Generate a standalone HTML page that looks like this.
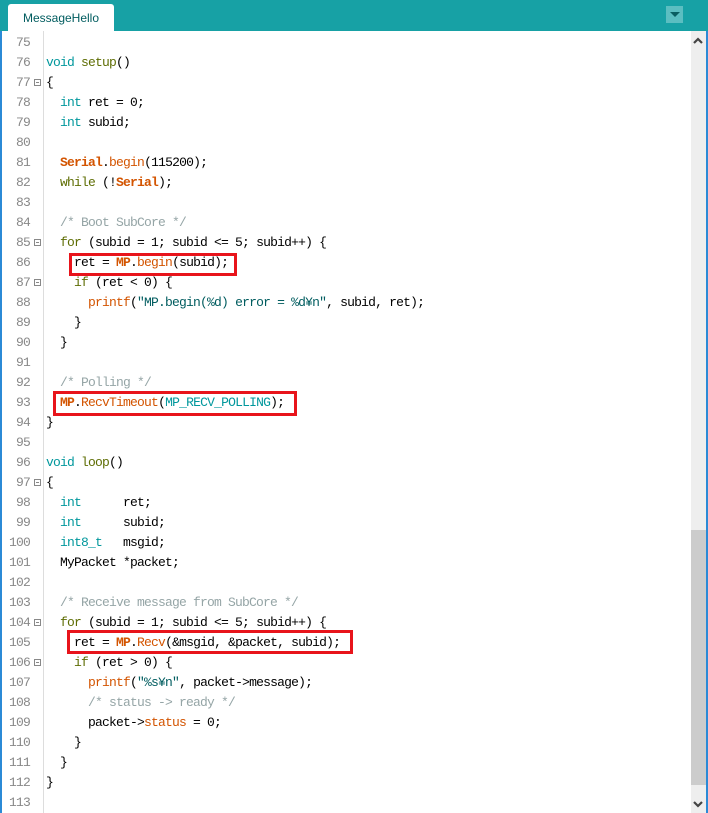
<!DOCTYPE html>
<html><head><meta charset="utf-8"><style>
html,body{margin:0;padding:0;}
body{width:708px;height:813px;position:relative;overflow:hidden;background:#fff;font-family:"Liberation Mono","Noto Sans CJK JP",monospace;font-size:13px;letter-spacing:-0.8px;}
.top{position:absolute;left:0;top:0;width:708px;height:31px;background:#17a1a5;}
.tab{position:absolute;left:8px;top:4px;width:106px;height:27px;background:#fff;border-radius:3px 3px 0 0;font-family:"Liberation Sans",sans-serif;font-size:12px;letter-spacing:0;color:#005c5f;line-height:28px;text-align:center;}
.menu{position:absolute;left:666px;top:6px;width:17px;height:17px;background:#5bbec1;}
.menu:after{content:"";position:absolute;left:4px;top:6px;border-left:5px solid transparent;border-right:5px solid transparent;border-top:5px solid #0a5e61;}
.lb{position:absolute;left:0;top:31px;width:2px;height:782px;background:#2b8ad6;}
.rb{position:absolute;left:706px;top:31px;width:2px;height:782px;background:#2b8ad6;}
.sb{position:absolute;left:691px;top:31px;width:15px;height:782px;background:#eee;}
.th{position:absolute;left:691px;top:530px;width:15px;height:255px;background:#ccc;}
.sep{position:absolute;left:43px;top:31px;width:1px;height:782px;background:#ddd;}
.ln{position:absolute;left:0;width:30px;text-align:right;color:#888;height:20px;line-height:21px;}
.c{position:absolute;left:46px;height:20px;line-height:21px;white-space:pre;color:#000;}
.f{position:absolute;left:34px;width:7px;height:7px;border:1px solid #888;box-sizing:border-box;}
.f:after{content:"";position:absolute;left:1px;top:2px;width:3px;height:1px;background:#888;}
.k{color:#00979c}.o{color:#5e6d03}.r{color:#d35400}.b{color:#d35400;font-weight:bold}.m{color:#95a5a6}.s{color:#005c5f}
.box{position:absolute;border:3px solid #e8141b;box-sizing:border-box;}
</style></head><body>
<div class="top"></div><div class="tab">MessageHello</div><div class="menu"></div>
<div class="lb"></div><div class="sep"></div><div class="sb"></div><div class="th"></div><div class="rb"></div>
<svg style="position:absolute;left:692px;top:36px" width="12" height="10"><path d="M2 7 L6 3 L10 7" stroke="#444" stroke-width="2.2" fill="none"/></svg>
<svg style="position:absolute;left:692px;top:799px" width="12" height="10"><path d="M2 3 L6 7 L10 3" stroke="#444" stroke-width="2.2" fill="none"/></svg>

<div class="ln" style="top:32px">75</div>
<div class="ln" style="top:52px">76</div><div class="c" style="top:52px"><span class="k">void</span> <span class="o">setup</span>()</div>
<div class="ln" style="top:72px">77</div><div class="f" style="top:79px"></div><div class="c" style="top:72px">{</div>
<div class="ln" style="top:92px">78</div><div class="c" style="top:92px">  <span class="k">int</span> ret = 0;</div>
<div class="ln" style="top:112px">79</div><div class="c" style="top:112px">  <span class="k">int</span> subid;</div>
<div class="ln" style="top:132px">80</div>
<div class="ln" style="top:152px">81</div><div class="c" style="top:152px">  <span class="b">Serial</span>.<span class="r">begin</span>(115200);</div>
<div class="ln" style="top:172px">82</div><div class="c" style="top:172px">  <span class="o">while</span> (!<span class="b">Serial</span>);</div>
<div class="ln" style="top:192px">83</div>
<div class="ln" style="top:212px">84</div><div class="c" style="top:212px">  <span class="m">/* Boot SubCore */</span></div>
<div class="ln" style="top:232px">85</div><div class="f" style="top:239px"></div><div class="c" style="top:232px">  <span class="o">for</span> (subid = 1; subid &lt;= 5; subid++) {</div>
<div class="ln" style="top:252px">86</div><div class="c" style="top:252px">    ret = <span class="b">MP</span>.<span class="r">begin</span>(subid);</div>
<div class="ln" style="top:272px">87</div><div class="f" style="top:279px"></div><div class="c" style="top:272px">    <span class="o">if</span> (ret &lt; 0) {</div>
<div class="ln" style="top:292px">88</div><div class="c" style="top:292px">      <span class="r">printf</span>(<span class="s">"MP.begin(%d) error = %d¥n"</span>, subid, ret);</div>
<div class="ln" style="top:312px">89</div><div class="c" style="top:312px">    }</div>
<div class="ln" style="top:332px">90</div><div class="c" style="top:332px">  }</div>
<div class="ln" style="top:352px">91</div>
<div class="ln" style="top:372px">92</div><div class="c" style="top:372px">  <span class="m">/* Polling */</span></div>
<div class="ln" style="top:392px">93</div><div class="c" style="top:392px">  <span class="b">MP</span>.<span class="r">RecvTimeout</span>(<span class="k">MP_RECV_POLLING</span>);</div>
<div class="ln" style="top:412px">94</div><div class="c" style="top:412px">}</div>
<div class="ln" style="top:432px">95</div>
<div class="ln" style="top:452px">96</div><div class="c" style="top:452px"><span class="k">void</span> <span class="o">loop</span>()</div>
<div class="ln" style="top:472px">97</div><div class="f" style="top:479px"></div><div class="c" style="top:472px">{</div>
<div class="ln" style="top:492px">98</div><div class="c" style="top:492px">  <span class="k">int</span>      ret;</div>
<div class="ln" style="top:512px">99</div><div class="c" style="top:512px">  <span class="k">int</span>      subid;</div>
<div class="ln" style="top:532px">100</div><div class="c" style="top:532px">  <span class="k">int8_t</span>   msgid;</div>
<div class="ln" style="top:552px">101</div><div class="c" style="top:552px">  MyPacket *packet;</div>
<div class="ln" style="top:572px">102</div>
<div class="ln" style="top:592px">103</div><div class="c" style="top:592px">  <span class="m">/* Receive message from SubCore */</span></div>
<div class="ln" style="top:612px">104</div><div class="f" style="top:619px"></div><div class="c" style="top:612px">  <span class="o">for</span> (subid = 1; subid &lt;= 5; subid++) {</div>
<div class="ln" style="top:632px">105</div><div class="c" style="top:632px">    ret = <span class="b">MP</span>.<span class="r">Recv</span>(&amp;msgid, &amp;packet, subid);</div>
<div class="ln" style="top:652px">106</div><div class="f" style="top:659px"></div><div class="c" style="top:652px">    <span class="o">if</span> (ret &gt; 0) {</div>
<div class="ln" style="top:672px">107</div><div class="c" style="top:672px">      <span class="r">printf</span>(<span class="s">"%s¥n"</span>, packet-&gt;message);</div>
<div class="ln" style="top:692px">108</div><div class="c" style="top:692px">      <span class="m">/* status -&gt; ready */</span></div>
<div class="ln" style="top:712px">109</div><div class="c" style="top:712px">      packet-&gt;<span class="r">status</span> = 0;</div>
<div class="ln" style="top:732px">110</div><div class="c" style="top:732px">    }</div>
<div class="ln" style="top:752px">111</div><div class="c" style="top:752px">  }</div>
<div class="ln" style="top:772px">112</div><div class="c" style="top:772px">}</div>
<div class="ln" style="top:792px">113</div>

<div class="box" style="left:69px;top:253px;width:168px;height:23px"></div>
<div class="box" style="left:53px;top:391px;width:244px;height:25px"></div>
<div class="box" style="left:67px;top:630px;width:286px;height:24px"></div>
</body></html>
